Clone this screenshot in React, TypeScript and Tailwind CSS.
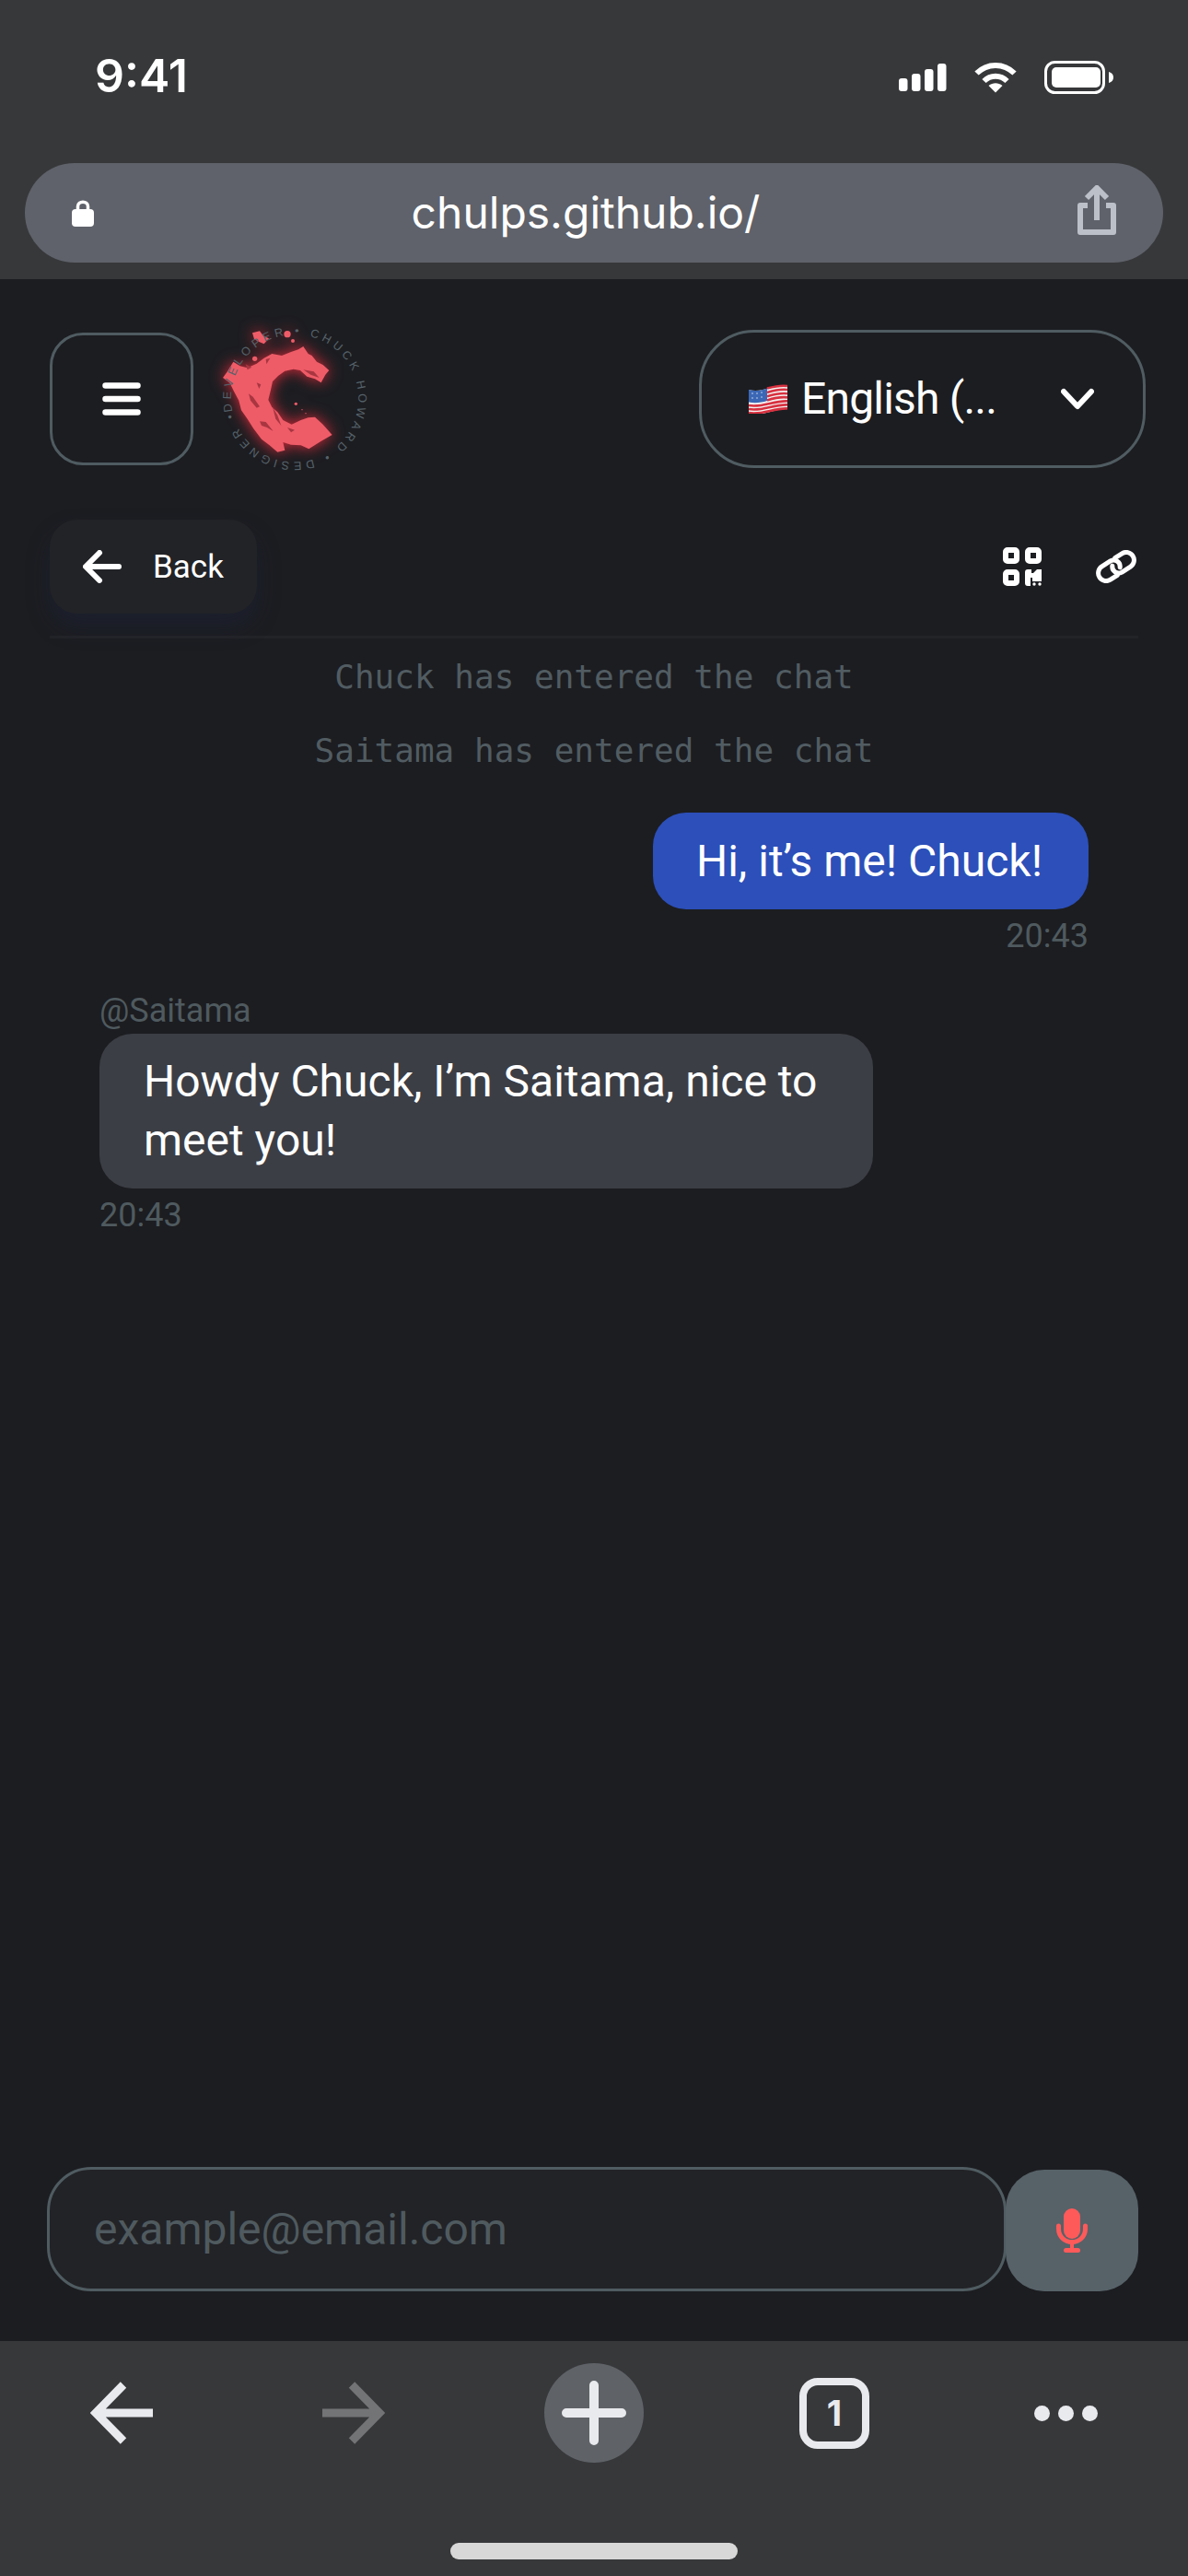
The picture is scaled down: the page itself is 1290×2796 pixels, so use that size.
import { type FC } from 'react';

const roboto = 'font-["Roboto",sans-serif]';

const SignalIcon: FC = () => (
  <svg width="52" height="30" viewBox="0 0 52 30" fill="#fff">
    <rect x="0" y="16" width="9.5" height="14" rx="3" />
    <rect x="14" y="11" width="9.5" height="19" rx="3" />
    <rect x="28" y="6" width="9.5" height="24" rx="3" />
    <rect x="42" y="0" width="9.5" height="30" rx="3" />
  </svg>
);

const WifiIcon: FC = () => (
  <svg width="46" height="34" viewBox="0 0 46 34" fill="none" stroke="#fff" strokeWidth="6">
    <path d="M2.5 12.5 C14 1 32 1 43.5 12.5" />
    <path d="M10.5 21 C17.5 14 28.5 14 35.5 21" />
    <path d="M15.5 26 C20 22.2 26 22.2 30.5 26 L23 33.5 Z" fill="#fff" stroke="none" />
  </svg>
);

const BatteryIcon: FC = () => (
  <svg width="75" height="36" viewBox="0 0 75 36" fill="none">
    <rect x="1.5" y="1.5" width="63" height="33" rx="10" stroke="#fff" strokeWidth="3" />
    <rect x="8" y="7" width="53" height="22" rx="5" fill="#fff" />
    <path d="M70 12 C73.5 13 75 15 75 18 C75 21 73.5 23 70 24 Z" fill="#fff" />
  </svg>
);

const LockIcon: FC = () => (
  <svg width="24" height="30" viewBox="0 0 24 30" fill="none">
    <path d="M6.5 13 V8 C6.5 1.5 17.5 1.5 17.5 8 V13" stroke="#fff" strokeWidth="3.5" />
    <rect x="0" y="11" width="24" height="19" rx="4" fill="#fff" />
  </svg>
);

const ShareIcon: FC = () => (
  <svg width="42" height="54" viewBox="0 0 42 54" fill="none" stroke="#bcc0c9" strokeWidth="6">
    <path d="M21 38 V4" />
    <path d="M10 14 L21 3 L32 14" />
    <path d="M11 22 H3 V51 H39 V22 H31" strokeLinejoin="round" />
  </svg>
);

const MenuIcon: FC = () => (
  <svg width="42" height="36" viewBox="0 0 42 36" stroke="#fff" strokeWidth="6.5" strokeLinecap="round">
    <path d="M3.5 3.5 H38.5 M3.5 18 H38.5 M3.5 32.5 H38.5" />
  </svg>
);

const Logo: FC = () => (
  <svg width="190" height="190" viewBox="0 0 570 570" className="ml-[10px] mt-[-18px] mb-[-22px] shrink-0">
    <g className="drop-shadow-[0_0_24px_#d92b3a]" fill="#ee5c68">
      <path d="M328 108 L344 132 L356 138 L372 158 L392 168 L412 186 L400 200 L386 226 L366 214 L340 206 L318 186 L296 182 L268 188 L246 204 L228 222 L222 250 L214 282 L226 306 L244 322 L262 348 L290 362 L320 348 L344 340 L366 338 L392 362 L422 396 L384 418 L346 442 L320 430 L288 428 L262 420 L268 446 L244 452 L218 430 L192 410 L166 376 L146 344 L126 316 L118 284 L102 254 L88 226 L66 210 L82 188 L100 158 L122 172 L146 178 L176 164 L200 146 L226 132 L258 138 L288 126 L312 118 Z" />
      <path d="M162 64 L186 58 L198 74 L216 82 L200 100 L182 92 L168 84 Z" />
      <circle cx="276" cy="68" r="11" />
      <circle cx="294" cy="90" r="6" />
      <circle cx="170" cy="148" r="8" />
      <circle cx="304" cy="295" r="5" />
      <circle cx="324" cy="314" r="2" />
      <circle cx="336" cy="326" r="2" />
    </g>
    <g fill="#a83640">
      <path d="M328 184 L362 190 L380 210 L352 200 Z" />
      <path d="M150 262 L164 272 L186 304 L176 308 L156 284 Z" />
      <path d="M186 352 L206 354 L230 384 L210 372 L192 366 Z" />
      <path d="M276 372 L300 380 L288 388 Z" />
      <path d="M228 306 L244 332 L256 366 L238 344 Z" />
      <path d="M140 166 L160 176 L146 184 Z" />
      <path d="M206 150 L220 146 L208 166 Z" />
      <path d="M176 226 L190 232 L184 246 Z" />
    </g>
    <path id="logo-ring" d="M97 320 A207.5 207.5 0 0 1 503 234 A207.5 207.5 0 0 1 97 320" fill="none" />
    <text fill="#56626a" fontSize="38" className='font-["Liberation_Sans",sans-serif]'>
      <textPath href="#logo-ring" textLength="1295" lengthAdjust="spacing">
        DEVELOPER • CHUCK HOWARD • DESIGNER •
      </textPath>
    </text>
  </svg>
);

const FlagIcon: FC = () => (
  <svg width="42" height="32" viewBox="0 0 42 32" className="shrink-0">
    <path d="M0 6 C14 10 28 0 42 1 V27 C28 26 14 36 0 32 Z" fill="#f4f1f1" />
    <g stroke="#d8303f" strokeWidth="2.6" fill="none">
      <path d="M20 4.6 C28 2.4 35 1 42 2" />
      <path d="M20 9 C28 6.6 35 5 42 6" />
      <path d="M20 13.2 C28 10.8 35 9.2 42 10.2" />
      <path d="M20 17.4 C28 15 35 13.4 42 14.4" />
      <path d="M0 23 C14 26 28 17.4 42 18.4" />
      <path d="M0 27 C14 30 28 21.4 42 22.4" />
      <path d="M0 31 C14 34 28 25.4 42 26.4" />
    </g>
    <path d="M0 6 C7 8 14 7 20 4.5 V18 C14 20 7 21 0 19.5 Z" fill="#3b67b5" />
    <g fill="#cfdcf2">
      <circle cx="4" cy="10" r="0.8" /><circle cx="9" cy="10" r="0.8" /><circle cx="14" cy="9" r="0.8" />
      <circle cx="4" cy="15" r="0.8" /><circle cx="9" cy="15" r="0.8" /><circle cx="14" cy="14" r="0.8" />
    </g>
  </svg>
);

const ChevronIcon: FC = () => (
  <svg width="36" height="24" viewBox="0 0 36 24" fill="none" stroke="#fff" strokeWidth="6" strokeLinecap="round" strokeLinejoin="round">
    <path d="M3 4 L18 20 L33 4" />
  </svg>
);

const BackArrow: FC = () => (
  <svg width="42" height="36" viewBox="0 0 42 36" fill="none" stroke="#fff" strokeWidth="6" strokeLinecap="round" strokeLinejoin="round">
    <path d="M39 18 H4 M18 3 L3 18 L18 33" />
  </svg>
);

const QrIcon: FC = () => (
  <svg width="42" height="42" viewBox="0 0 42 42" fill="#fff">
    <path fillRule="evenodd" d="M5 0 H13 A5 5 0 0 1 18 5 V13 A5 5 0 0 1 13 18 H5 A5 5 0 0 1 0 13 V5 A5 5 0 0 1 5 0 Z M6 6 V12 H12 V6 Z" />
    <path fillRule="evenodd" d="M29 0 H37 A5 5 0 0 1 42 5 V13 A5 5 0 0 1 37 18 H29 A5 5 0 0 1 24 13 V5 A5 5 0 0 1 29 0 Z M30 6 V12 H36 V6 Z" />
    <path fillRule="evenodd" d="M5 24 H13 A5 5 0 0 1 18 29 V37 A5 5 0 0 1 13 42 H5 A5 5 0 0 1 0 37 V29 A5 5 0 0 1 5 24 Z M6 30 V36 H12 V30 Z" />
    <path d="M24 27 A3 3 0 0 1 27 24 H31 V28 H33 L37 24 H42 V37 H32 V33 H30 V42 H27 A3 3 0 0 1 24 39 Z" />
    <circle cx="34" cy="40" r="1.7" />
    <circle cx="40" cy="40" r="1.7" />
  </svg>
);

const LinkIcon: FC = () => (
  <svg width="46" height="36" viewBox="-23 -18 46 36" fill="none" stroke="#fff" strokeWidth="5" strokeLinecap="round">
    <g transform="rotate(-33)">
      <path d="M-4 8.5 H-13 A8.5 8.5 0 0 1 -13 -8.5 H-2 A7 7 0 0 1 3 3" />
      <path d="M4 -8.5 H13 A8.5 8.5 0 0 1 13 8.5 H2 A7 7 0 0 1 -3 -3" />
    </g>
  </svg>
);

const MicIcon: FC = () => (
  <svg width="34" height="48" viewBox="0 0 34 48" fill="#ff5a5a">
    <rect x="8" y="0" width="18" height="33" rx="9" />
    <path d="M2.5 19 V22 C2.5 30.5 9 36.5 17 36.5 C25 36.5 31.5 30.5 31.5 22 V19" fill="none" stroke="#ff5a5a" strokeWidth="5" strokeLinecap="round" />
    <rect x="15" y="36" width="4" height="8" />
    <rect x="8" y="43" width="18" height="5" rx="2.5" />
  </svg>
);

const NavArrow: FC<{ flip?: boolean; color: string; className?: string }> = ({ flip, color, className }) => (
  <svg width="68" height="68" viewBox="0 0 68 68" fill="none" stroke={color} strokeWidth="9" className={className}>
    {flip ? <path d="M0 34 H62 M32 3.5 L62 34 L32 64.5" /> : <path d="M68 34 H6 M36 3.5 L6 34 L36 64.5" />}
  </svg>
);

const PlusIcon: FC = () => (
  <svg width="70" height="70" viewBox="0 0 70 70" stroke="#e9eaee" strokeWidth="10" strokeLinecap="round">
    <path d="M5 35 H65 M35 5 V65" />
  </svg>
);

const SystemLine: FC<{ text: string }> = ({ text }) => (
  <p className='h-[54px] text-center text-[36px] leading-[54px] text-[#515c62] font-["DejaVu_Sans_Mono",monospace]'>{text}</p>
);

const App: FC = () => (
  <div className={`flex h-[2796px] w-[1290px] flex-col overflow-hidden bg-[#1c1d21] ${roboto}`}>
    {/* browser chrome, top */}
    <div className="flex h-[303px] shrink-0 flex-col bg-[#37383a] px-[27px]">
      <div className="flex h-[177px] items-start justify-between pt-[54px]">
        <span className='pl-[76px] text-[50px] font-semibold leading-[56px] text-white font-["Inter",sans-serif]'>9:41</span>
        <div className="mt-[12px] flex items-center pr-[54px]">
          <SignalIcon />
          <div className="ml-[30px]"><WifiIcon /></div>
          <div className="ml-[30px]"><BatteryIcon /></div>
        </div>
      </div>
      <div className="flex h-[108px] items-center rounded-full bg-[#5f626a] pl-[51px] pr-[51px]">
        <LockIcon />
        <span className='flex-1 text-center text-[48px] leading-[56px] text-white font-["Inter",sans-serif]'>chulps.github.io/</span>
        <div className="-mt-[6px]"><ShareIcon /></div>
      </div>
    </div>

    {/* site header */}
    <div className="flex shrink-0 items-center pl-[54px] pr-[46px] pt-[55px]">
      <button className="flex h-[144px] w-[156px] items-center justify-center rounded-[36px] border-[3px] border-[#4f5c61]">
        <MenuIcon />
      </button>
      <Logo />
      <div className="ml-auto flex h-[150px] w-[485px] items-center rounded-[60px] border-[3px] border-[#4f5c61] pl-[51px] pr-[53px]">
        <FlagIcon />
        <span className="ml-[15px] text-[48px] leading-[60px] tracking-[-0.8px] text-white">English (...</span>
        <div className="ml-auto"><ChevronIcon /></div>
      </div>
    </div>

    {/* back row */}
    <div className="mx-[54px] mt-[56px] flex h-[129px] shrink-0 items-start justify-between border-b-[3px] border-[#232428]">
      <button className="flex h-[102px] w-[225px] items-center rounded-[30px] bg-[#222327] pl-[36px] shadow-[0_14px_24px_rgba(28,36,70,0.35)]">
        <BackArrow />
        <span className="ml-[34px] pt-[2px] text-[35px] leading-[44px] text-white">Back</span>
      </button>
      <div className="flex items-center pr-[1px] pt-[30px]">
        <QrIcon />
        <div className="ml-[58px]"><LinkIcon /></div>
      </div>
    </div>

    {/* chat */}
    <div className="flex flex-1 flex-col pl-[108px] pr-[108px] pt-[15px]">
      <div className="-mx-[54px] flex flex-col gap-[26px]">
        <SystemLine text="Chuck has entered the chat" />
        <SystemLine text="Saitama has entered the chat" />
      </div>
      <div className="mt-[40px] flex flex-col items-end">
        <div className="flex h-[105px] w-[473px] items-center justify-center rounded-[36px] bg-[#2c4fb9] pr-[3px] text-[48px] leading-[64px] text-white">
          Hi, it’s me! Chuck!
        </div>
        <span className="mt-[7px] text-[36px] leading-[44px] text-[#4f5a5f]">20:43</span>
      </div>
      <div className="mt-[37px] flex flex-col items-start">
        <span className="text-[36px] leading-[44px] text-[#4f5a5f]">@Saitama</span>
        <div className="mt-[3px] w-[840px] rounded-[36px] bg-[#3c3e45] pb-[20px] pl-[48px] pr-[48px] pt-[20px] text-[48px] leading-[64px] text-white">
          Howdy Chuck, I’m Saitama, nice to meet you!
        </div>
        <span className="mt-[7px] text-[36px] leading-[44px] text-[#4f5a5f]">20:43</span>
      </div>
    </div>

    {/* message input */}
    <div className="flex shrink-0 items-end pb-[54px] pl-[51px] pr-[54px]">
      <div className="flex h-[135px] w-[1042px] items-center rounded-[48px] border-[3px] border-[#4f5c61] bg-[#222327] pl-[48px]">
        <span className="text-[48px] leading-[56px] text-[#4f5a5f]">example@email.com</span>
      </div>
      <button className="-ml-[1px] flex h-[132px] w-[144px] items-center justify-center rounded-[42px] bg-[#566268]">
        <MicIcon />
      </button>
    </div>

    {/* browser chrome, bottom */}
    <div className="relative h-[255px] shrink-0 bg-[#37383a]">
      <div className="flex items-center pl-[98px] pt-[24px]">
        <NavArrow color="#e9eaee" />
        <NavArrow flip color="#737476" className="ml-[184px]" />
        <div className="ml-[173px] flex h-[108px] w-[108px] items-center justify-center rounded-full bg-[#5f6267]">
          <PlusIcon />
        </div>
        <div className='ml-[169px] flex h-[77px] w-[76px] items-center justify-center rounded-[20px] border-[8px] border-[#e9eaee] text-[38px] font-bold leading-none text-[#e9eaee] font-["Inter",sans-serif]'>
          1
        </div>
        <div className="ml-[179px] flex gap-[9px]">
          <span className="h-[17px] w-[17px] rounded-full bg-[#e9eaee]" />
          <span className="h-[17px] w-[17px] rounded-full bg-[#e9eaee]" />
          <span className="h-[17px] w-[17px] rounded-full bg-[#e9eaee]" />
        </div>
      </div>
      <div className="mx-auto mt-[87px] h-[18px] w-[312px] rounded-full bg-[#d8d8d8]" />
    </div>
  </div>
);

export default App;
